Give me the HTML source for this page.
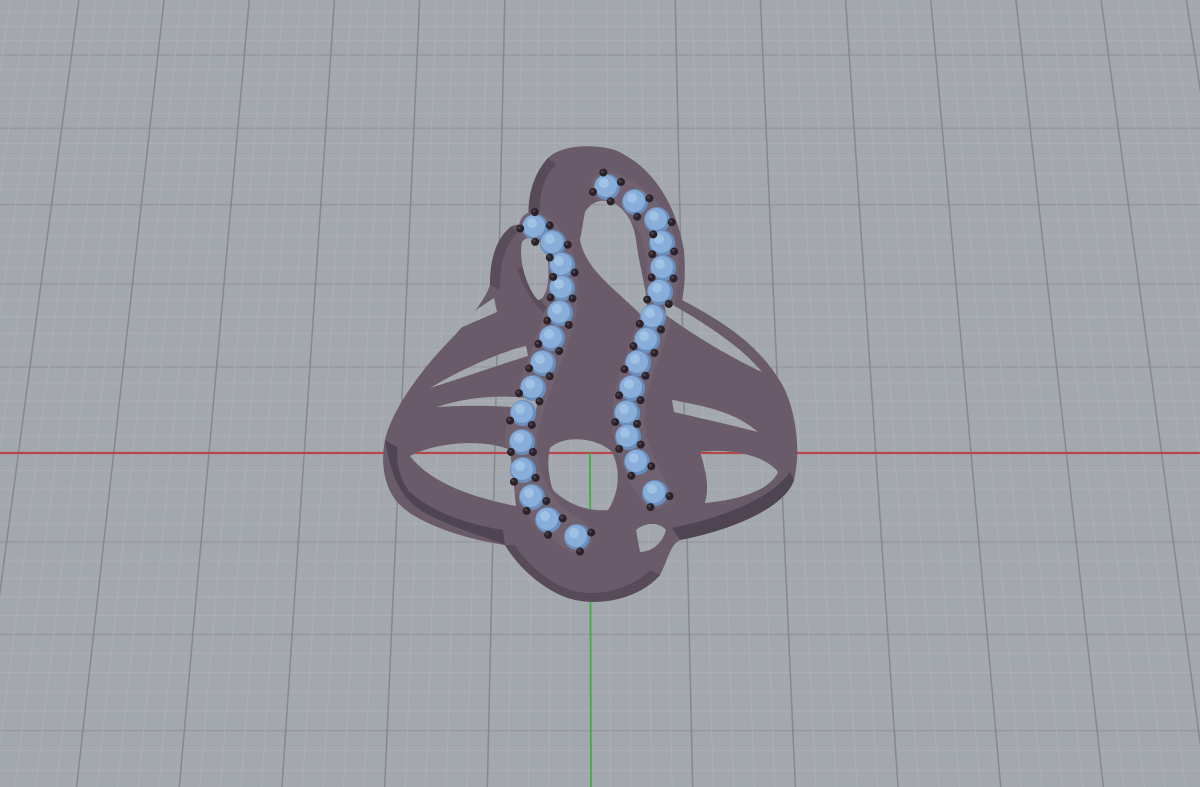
<!DOCTYPE html>
<html><head><meta charset="utf-8"><style>
html,body{margin:0;padding:0;width:1200px;height:787px;overflow:hidden;background:#a3a7ae}
svg{display:block}
</style></head><body>
<svg id="s" width="1200" height="787" viewBox="0 0 1200 787" xmlns="http://www.w3.org/2000/svg">
<defs>
<clipPath id="holes">
<path d="M585,212 C600,188 632,205 636,240 C640,272 650,298 646,320 C620,292 586,272 580,240 Z"/>
<path d="M522,242 C530,232 546,240 548,262 C550,285 545,300 538,300 C528,290 518,262 522,242 Z"/>
<path d="M428,342 L494,298 L497,312 Z"/>
<path d="M430,388 C460,370 500,352 526,346 L528,356 C495,366 462,378 430,388 Z"/>
<path d="M437,407 C470,396 510,394 538,400 L536,410 C505,405 470,405 437,407 Z"/>
<path d="M410,456 C440,440 490,440 510,450 L516,506 C470,497 430,482 410,456 Z"/>
<path d="M664,300 C700,320 740,345 762,372 C740,362 700,340 666,315 Z"/>
<path d="M672,400 C705,406 735,412 758,432 C735,426 700,418 674,412 Z"/>
<path d="M700,452 C730,448 765,455 778,472 C770,490 740,500 705,503 C710,485 705,468 700,452 Z"/>
<path d="M550,448 C565,434 598,438 612,452 C622,472 618,495 608,510 C585,512 565,502 553,490 C548,475 547,460 550,448 Z"/>
<path d="M636,530 C645,522 660,522 666,530 C662,545 650,552 640,552 Z"/>
</clipPath>
</defs>
<g id="grid"></g>
<g id="ring">
<path fill="#6a5b6b" d="M385,440 C392,410 420,370 455,335 C470,318 485,300 490,285 C490,262 495,238 512,226 C522,222 528,226 530,230 C526,205 530,178 548,158 C560,146 590,143 615,150 C650,165 675,200 684,250 C686,275 684,292 682,300 C720,320 762,345 785,390 C798,420 800,455 794,480 C786,505 740,528 680,540 C670,545 668,560 660,575 C640,598 600,608 568,598 C545,590 520,570 505,545 C470,540 420,525 400,505 C385,490 380,465 385,440 Z"/>
<path fill="#4f4452" d="M385,440 C390,470 398,495 420,510 C455,530 490,538 505,545 L503,530 C470,525 430,512 408,490 C398,475 396,458 398,448 Z"/>
<path fill="#4f4452" d="M794,480 C786,505 740,528 680,540 L672,528 C720,518 770,500 790,472 Z"/>
<path fill="#574a59" d="M505,545 C520,570 545,590 568,598 C600,608 640,598 660,575 L650,570 C630,590 595,598 570,590 C548,582 528,565 515,545 Z"/>
<path fill="#574a59" d="M548,158 C530,178 526,205 530,230 L540,232 C538,205 540,180 556,165 Z"/>
<path fill="#594c5b" d="M512,226 C495,238 490,262 490,285 L500,290 C500,262 505,245 518,232 Z"/>
<path fill="none" stroke="#716272" stroke-width="32" stroke-linecap="round" d="M535,227 C560,245 565,275 560,313 C552,350 530,390 522,430 C518,470 530,510 577,537"/>
<path fill="none" stroke="#716272" stroke-width="32" stroke-linecap="round" d="M607,187 C640,198 662,225 663,268 C662,310 645,345 632,388 C624,420 628,450 655,493"/>
<path fill="none" stroke="#5a4d5c" stroke-width="8" d="M608,232 C625,250 640,275 640,300"/>
<path fill="none" stroke="#5a4d5c" stroke-width="6" d="M520,268 C525,285 535,300 545,310"/>
</g>
<use href="#grid" clip-path="url(#holes)"/>
<g id="gems"></g>
</svg>
<script>
var NS="http://www.w3.org/2000/svg";
var g=document.getElementById("grid");
function ln(x1,y1,x2,y2,c,w){var l=document.createElementNS(NS,"line");l.setAttribute("x1",x1);l.setAttribute("y1",y1);l.setAttribute("x2",x2);l.setAttribute("y2",y2);l.setAttribute("stroke",c);l.setAttribute("stroke-width",w);g.appendChild(l);}
var bg=document.createElementNS(NS,"rect");bg.setAttribute("width",1200);bg.setAttribute("height",787);bg.setAttribute("fill","#a3a7ae");g.appendChild(bg);
var hs=[];var y=453;var n=0;
while(y<800){var s=17.5+(y-453)*0.008;y+=s;n++;hs.push([y,n]);}
y=453;n=0;while(y>-20){var s=17.5+(y-453)*0.008;y-=s;n--;hs.push([y,n]);}
hs.forEach(function(h){var maj=(h[1]%5==0);ln(0,h[0],1200,h[0],maj?"#94989e":"#acb0b6",maj?1.4:1);});
for(var i=-45;i<=45;i++){if(i==0)continue;var o=i*19.06;var xt=590+o*(3835)/4290, xb=590+o*(787+3835)/4290;var maj=(i%5==0);ln(xt,0,xb,787,maj?"#84888e":"#acb0b6",maj?1.5:1);}
ln(0,453,1200,453,"#b5474a",2.2);
ln(590,453,591,787,"#3fae3f",1.8);
var gm=document.getElementById("gems");
var L=[[535,227],[553,243],[562,265],[562,288],[560,313],[552,338],[543,363],[533,388],[523,413],[522,442],[523,470],[532,497],[548,520],[577,537]];
var R=[[607,187],[635,202],[657,220],[662,243],[663,268],[660,292],[653,317],[647,340],[638,363],[632,388],[627,413],[628,437],[637,462],[655,493]];
function c(x,y,r,f,p){var e=document.createElementNS(NS,"circle");e.setAttribute("cx",x);e.setAttribute("cy",y);e.setAttribute("r",r);e.setAttribute("fill",f);p.appendChild(e);}
function row(A){var pr=[];for(var i=0;i<A.length;i++){var a=A[Math.max(0,i-1)],b=A[Math.min(A.length-1,i+1)];var dx=b[0]-a[0],dy=b[1]-a[1],d=Math.hypot(dx,dy)||1;var tx=dx/d,ty=dy/d,nx=-ty,ny=tx;var x=A[i][0],y=A[i][1];
c(x,y,13,"#6b8fba",gm);c(x-1,y-1,11,"#88aed9",gm);c(x-3,y-4,5,"#a0c2e4",gm);
pr.push([x+nx*11+tx*10,y+ny*11+ty*10]);pr.push([x-nx*11+tx*10,y-ny*11+ty*10]);}
var a=A[0],b=A[1];var dx=b[0]-a[0],dy=b[1]-a[1],d=Math.hypot(dx,dy);var x=a[0],y=a[1];pr.push([x+(-dy/d)*11-dx/d*10,y+(dx/d)*11-dy/d*10]);pr.push([x-(-dy/d)*11-dx/d*10,y-(dx/d)*11-dy/d*10]);
pr.forEach(function(p){c(p[0],p[1],4,"#2b2229",gm);c(p[0]-1,p[1]-1,1.5,"#4a4048",gm);});}
row(L);row(R);
</script>
</body></html>
